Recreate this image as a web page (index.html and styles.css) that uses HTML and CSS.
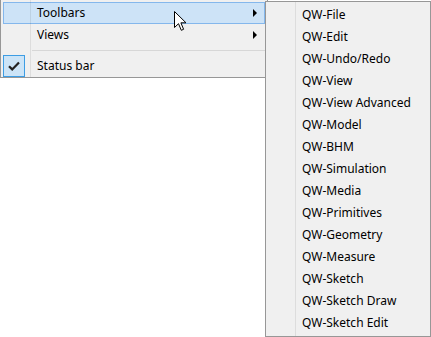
FILE: index.html
```html
<!DOCTYPE html>
<html lang="en">
<head>
    <meta charset="UTF-8">
    <title>Toolbars menu</title>
    <link rel="stylesheet" href="styles.css">
</head>
<body>
    <div class="menu main-menu">
        <div class="item active">
            <span class="icon"></span>
            <span class="label">Toolbars</span>
            <span class="arrow"></span>
        </div>
        <div class="item">
            <span class="icon"></span>
            <span class="label">Views</span>
            <span class="arrow"></span>
        </div>
        <div class="sep"></div>
        <div class="item">
            <span class="icon checked">
                <svg width="12" height="10" viewBox="0 0 12 10">
                    <path d="M1 5.2 L4.2 8.4 L11 1.4" fill="none" stroke="#222" stroke-width="2.2"/>
                </svg>
            </span>
            <span class="label">Status bar</span>
        </div>
    </div>

    <div class="menu submenu">
        <div class="item"><span class="icon"></span><span class="label">QW-File</span></div>
        <div class="item"><span class="icon"></span><span class="label">QW-Edit</span></div>
        <div class="item"><span class="icon"></span><span class="label">QW-Undo/Redo</span></div>
        <div class="item"><span class="icon"></span><span class="label">QW-View</span></div>
        <div class="item"><span class="icon"></span><span class="label">QW-View Advanced</span></div>
        <div class="item"><span class="icon"></span><span class="label">QW-Model</span></div>
        <div class="item"><span class="icon"></span><span class="label">QW-BHM</span></div>
        <div class="item"><span class="icon"></span><span class="label">QW-Simulation</span></div>
        <div class="item"><span class="icon"></span><span class="label">QW-Media</span></div>
        <div class="item"><span class="icon"></span><span class="label">QW-Primitives</span></div>
        <div class="item"><span class="icon"></span><span class="label">QW-Geometry</span></div>
        <div class="item"><span class="icon"></span><span class="label">QW-Measure</span></div>
        <div class="item"><span class="icon"></span><span class="label">QW-Sketch</span></div>
        <div class="item"><span class="icon"></span><span class="label">QW-Sketch Draw</span></div>
        <div class="item"><span class="icon"></span><span class="label">QW-Sketch Edit</span></div>
    </div>

    <!-- mouse pointer over the Toolbars item -->
    <svg class="cursor" width="13" height="21" viewBox="0 0 13 21">
        <path d="M0.5 0.5 L0.5 16.5 L4.5 12.7 L7.3 19.3 L9.6 18.3 L6.9 11.8 L12 11.8 Z" fill="#fff" stroke="#000" stroke-width="1"/>
    </svg>
</body>
</html>
```

FILE: styles.css
```css
body {
    margin: 0;
    background-color: #fff;
    font-family: "Segoe UI", "Noto Sans", Arial, sans-serif;
    font-size: 12px;
    color: #000;
    width: 431px;
    height: 337px;
    overflow: hidden;
    position: relative;
}
.menu {
    position: relative;
    background-color: #f0f0f0;
    border: 1px solid #979797;
    padding: 2px;
    box-sizing: border-box;
}
/* icon gutter line */
.menu::before {
    content: "";
    position: absolute;
    top: 0;
    bottom: 0;
    left: 29px;
    width: 1px;
    background-color: rgba(0, 0, 0, 0.08);
    z-index: 2;
}
.main-menu {
    width: 268px;
    height: 79px;
    margin-top: -1px;
}
.submenu {
    position: absolute;
    left: 265px;
    top: 1px;
    width: 166px;
    height: 336px;
    box-shadow: none;
}
.item {
    display: flex;
    align-items: center;
    height: 22px;
    box-sizing: border-box;
    border: 1px solid transparent;
}
.item.active {
    background-color: #cde3f7;
    border-color: #84b7ec;
}
.icon {
    width: 22px;
    height: 22px;
    margin-left: -1px;
    margin-right: 10px;
    box-sizing: border-box;
    display: flex;
    align-items: center;
    justify-content: center;
}
.icon.checked {
    background-color: #cce4f7;
    border: 1px solid #3d9de4;
}
.label {
    flex: 1;
    white-space: nowrap;
    padding-left: 2px;
    line-height: 20px;
}
.arrow {
    width: 0;
    height: 0;
    border-top: 4px solid transparent;
    border-bottom: 4px solid transparent;
    border-left: 4px solid #000;
    margin-right: 7px;
}
.sep {
    height: 9px;
    margin-left: 29px;
    position: relative;
}
.sep::after {
    content: "";
    position: absolute;
    left: 0;
    right: 0;
    top: 4px;
    height: 1px;
    background-color: #d7d7d7;
}
.cursor {
    position: absolute;
    left: 174px;
    top: 11px;
}
```
